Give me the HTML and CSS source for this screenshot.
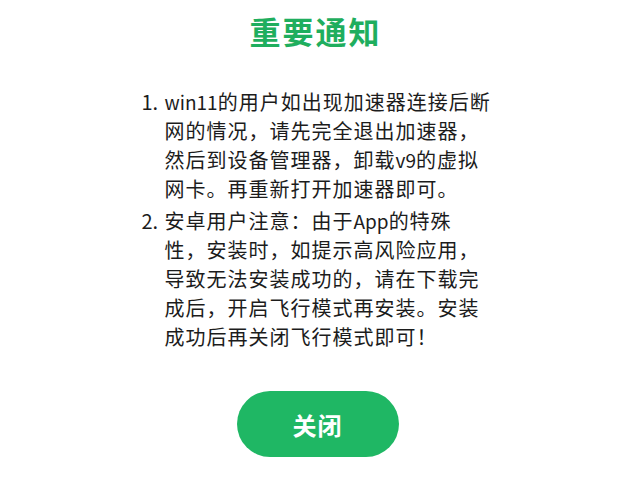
FILE: index.html
```html
<!DOCTYPE html>
<html lang="zh-CN">
<head>
<meta charset="utf-8">
<title>重要通知</title>
<link rel="stylesheet" href="styles.css">
</head>
<body>
<div class="notice">
  <h1 class="title">重要通知</h1>
  <ol class="list">
    <li class="item"><span class="num">1.</span><span class="text"><span class="latin">win11</span>的用户如出现加速器连接后断<br>网的情况，请先完全退出加速器，<br>然后到设备管理器，卸载<span class="latin">v9</span>的虚拟<br>网卡。再重新打开加速器即可。</span></li>
    <li class="item"><span class="num">2.</span><span class="text">安卓用户注意：由于<span class="latin">App</span>的特殊<br>性，安装时，如提示高风险应用，<br>导致无法安装成功的，请在下载完<br>成后，开启飞行模式再安装。安装<br>成功后再关闭飞行模式即可！</span></li>
  </ol>
  <div class="actions"><button class="close-btn">关闭</button></div>
</div>
</body>
</html>
```
FILE: styles.css
```css
html, body {
  margin: 0;
  padding: 0;
  background: #ffffff;
}
body {
  font-family: "Noto Sans CJK SC", "Noto Sans", sans-serif;
  color: #1a1a1a;
}
.notice {
  display: flex;
  flex-direction: column;
  align-items: center;
  padding-top: 11px;
}
.title {
  margin: 0;
  font-size: 31px;
  line-height: 40px;
  font-weight: 700;
  letter-spacing: 2px;
  color: #1fae5e;
}
.list {
  list-style: none;
  margin: 36px 0 0 0;
  padding: 0;
  width: 350px;
  display: flex;
  flex-direction: column;
  gap: 3px;
  transform: translateX(1px);
}
.item {
  display: flex;
  font-size: 20px;
  line-height: 29px;
  letter-spacing: 1px;
  color: #1c1c1c;
}
.num {
  width: 23px;
  flex: none;
  letter-spacing: 0;
}
.text {
  flex: 1;
  white-space: nowrap;
}
.latin {
  letter-spacing: 0;
  font-size: 19px;
}
.actions {
  margin-top: 40px;
  display: flex;
  justify-content: center;
}
.close-btn {
  width: 162px;
  height: 66px;
  border: none;
  border-radius: 33px;
  background: #1fb764;
  color: #ffffff;
  font-family: "Noto Sans CJK SC", sans-serif;
  font-size: 24px;
  font-weight: 700;
  letter-spacing: 1px;
  transform: translateX(2px);
}
```
